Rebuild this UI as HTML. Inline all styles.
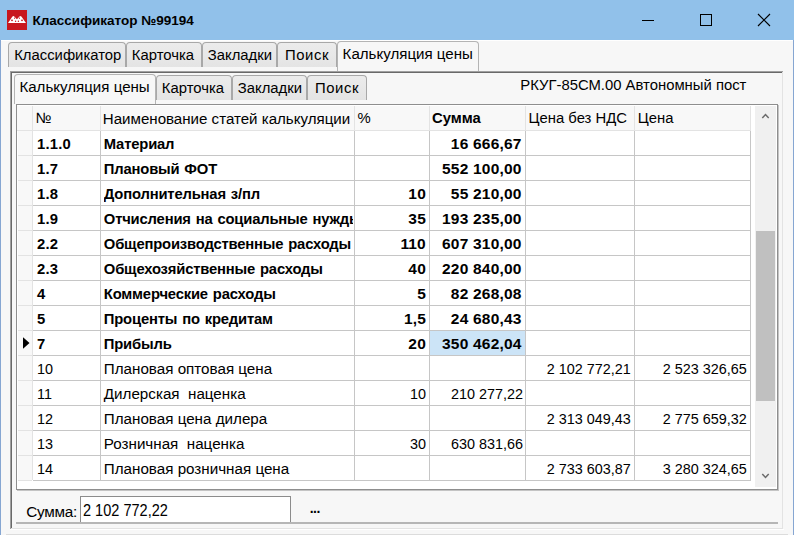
<!DOCTYPE html>
<html><head><meta charset="utf-8"><style>
html,body{margin:0;padding:0;}
body{width:794px;height:535px;position:relative;overflow:hidden;background:#F7F7F7;font-family:"Liberation Sans", sans-serif;}
.b{position:absolute;}
.t{position:absolute;white-space:nowrap;color:#000;}
</style></head><body>
<div class="b" style="left:0px;top:0px;width:794px;height:40px;background:#91C1EA;"></div><div class="b" style="left:7px;top:10px;width:20px;height:20px;background:#C8171E;"></div><svg class="b" style="left:7px;top:10px" width="20" height="20" viewBox="0 0 20 20"><path d="M1 12.9 L2.2 11.2 L5.4 6.6 L6.8 6 L9.9 9.2 L13 6 L14.4 6.6 L17.7 11.2 L19 12.9 Z" fill="#fff"/><circle cx="5" cy="10.3" r="0.9" fill="#C8171E"/><circle cx="7.6" cy="8.2" r="0.6" fill="#C8171E"/><circle cx="15" cy="10.3" r="0.9" fill="#C8171E"/><circle cx="12.4" cy="8.2" r="0.6" fill="#C8171E"/><circle cx="8.6" cy="11.2" r="0.7" fill="#C8171E"/><circle cx="11.4" cy="11.2" r="0.7" fill="#C8171E"/></svg><div class="t" style="left:32.5px;top:13.67px;font-size:13.5px;line-height:13.5px;font-weight:bold;color:#000;">Классификатор №99194</div><div class="b" style="left:642px;top:20px;width:12px;height:1px;background:#000;"></div><div class="b" style="left:700px;top:14px;width:12px;height:12px;border:1px solid #000;box-sizing:border-box;"></div><svg class="b" style="left:757px;top:13px" width="14" height="14" viewBox="0 0 14 14"><path d="M1 1 L13 13 M13 1 L1 13" stroke="#000" stroke-width="1.15" fill="none"/></svg><div class="b" style="left:0px;top:40px;width:1px;height:495px;background:#86A6D2;"></div><div class="b" style="left:793px;top:40px;width:1px;height:495px;background:#86A6D2;"></div><div class="b" style="left:1px;top:40px;width:792px;height:1px;background:#FFFFFF;"></div><div class="b" style="left:8px;top:42px;width:118px;height:25px;background:linear-gradient(#ECECEC,#E4E4E4);border:1px solid #A8A8A8;border-bottom:none;border-radius:4px 4px 0 0;box-sizing:border-box;"></div><div class="t" style="left:14.2px;top:48.43px;font-size:14.85px;line-height:14.85px;color:#000;">Классификатор</div><div class="b" style="left:126px;top:42px;width:76px;height:25px;background:linear-gradient(#ECECEC,#E4E4E4);border:1px solid #A8A8A8;border-bottom:none;border-radius:4px 4px 0 0;box-sizing:border-box;"></div><div class="t" style="left:131.8px;top:48.43px;font-size:14.85px;line-height:14.85px;color:#000;">Карточка</div><div class="b" style="left:202px;top:42px;width:75px;height:25px;background:linear-gradient(#ECECEC,#E4E4E4);border:1px solid #A8A8A8;border-bottom:none;border-radius:4px 4px 0 0;box-sizing:border-box;"></div><div class="t" style="left:207.8px;top:48.43px;font-size:14.85px;line-height:14.85px;color:#000;">Закладки</div><div class="b" style="left:277px;top:42px;width:60px;height:25px;background:linear-gradient(#ECECEC,#E4E4E4);border:1px solid #A8A8A8;border-bottom:none;border-radius:4px 4px 0 0;box-sizing:border-box;"></div><div class="t" style="left:285px;top:48.43px;font-size:14.85px;line-height:14.85px;letter-spacing:0.6px;color:#000;">Поиск</div><div class="b" style="left:10px;top:71px;width:773px;height:1px;background:#A0A0A0;"></div><div class="b" style="left:11px;top:72px;width:771px;height:1px;background:#696969;"></div><div class="b" style="left:10px;top:71px;width:1px;height:458px;background:#A0A0A0;"></div><div class="b" style="left:11px;top:72px;width:1px;height:456px;background:#696969;"></div><div class="b" style="left:782px;top:72px;width:1px;height:457px;background:#E3E3E3;"></div><div class="b" style="left:11px;top:528px;width:772px;height:1px;background:#E3E3E3;"></div><div class="b" style="left:10px;top:529px;width:774px;height:1px;background:#FFFFFF;"></div><div class="b" style="left:6px;top:534px;width:782px;height:1px;background:#DCDCDC;"></div><div class="b" style="left:337px;top:41px;width:142px;height:30px;background:#F7F7F7;border:1px solid #B4B4B4;border-bottom:none;border-radius:4px 4px 0 0;box-sizing:border-box;"></div><div class="t" style="left:342.6px;top:46.12px;font-size:15.1px;line-height:15.1px;color:#000;">Калькуляция цены</div><div class="b" style="left:156px;top:75px;width:76px;height:25px;background:linear-gradient(#ECECEC,#E4E4E4);border:1px solid #A8A8A8;border-bottom:none;border-radius:4px 4px 0 0;box-sizing:border-box;"></div><div class="t" style="left:161.8px;top:80.93px;font-size:14.85px;line-height:14.85px;color:#000;">Карточка</div><div class="b" style="left:232px;top:75px;width:75px;height:25px;background:linear-gradient(#ECECEC,#E4E4E4);border:1px solid #A8A8A8;border-bottom:none;border-radius:4px 4px 0 0;box-sizing:border-box;"></div><div class="t" style="left:237.8px;top:80.93px;font-size:14.85px;line-height:14.85px;color:#000;">Закладки</div><div class="b" style="left:307px;top:75px;width:60px;height:25px;background:linear-gradient(#ECECEC,#E4E4E4);border:1px solid #A8A8A8;border-bottom:none;border-radius:4px 4px 0 0;box-sizing:border-box;"></div><div class="t" style="left:315px;top:80.93px;font-size:14.85px;line-height:14.85px;letter-spacing:0.6px;color:#000;">Поиск</div><div class="b" style="left:14px;top:74px;width:142px;height:30px;background:#F7F7F7;border:1px solid #B4B4B4;border-bottom:none;border-radius:4px 4px 0 0;box-sizing:border-box;"></div><div class="t" style="left:19.4px;top:78.52px;font-size:15.1px;line-height:15.1px;color:#000;">Калькуляция цены</div><div class="t" style="left:520.3px;top:78.23px;font-size:14.85px;line-height:14.85px;color:#000;">РКУГ-85СМ.00 Автономный пост</div><div class="b" style="left:16px;top:104px;width:762px;height:386px;background:#fff;border:1px solid #8E8E8E;box-sizing:border-box;"></div><div class="b" style="left:17px;top:490px;width:762px;height:1px;background:#C4C4C4;"></div><div class="b" style="left:778px;top:105px;width:1px;height:386px;background:#C4C4C4;"></div><div class="b" style="left:17px;top:106px;width:734px;height:24px;background:#F8F8F8;"></div><div class="b" style="left:18px;top:130px;width:14px;height:350px;background:#F8F8F8;"></div><div class="b" style="left:32px;top:106px;width:1px;height:24px;background:#E3E3E3;"></div><div class="b" style="left:32px;top:130px;width:1px;height:350px;background:#E3E3E3;"></div><div class="b" style="left:100px;top:106px;width:1px;height:24px;background:#E3E3E3;"></div><div class="b" style="left:100px;top:130px;width:1px;height:350px;background:#C6C6C6;"></div><div class="b" style="left:354px;top:106px;width:1px;height:24px;background:#E3E3E3;"></div><div class="b" style="left:354px;top:130px;width:1px;height:350px;background:#C6C6C6;"></div><div class="b" style="left:429px;top:106px;width:1px;height:24px;background:#E3E3E3;"></div><div class="b" style="left:429px;top:130px;width:1px;height:350px;background:#C6C6C6;"></div><div class="b" style="left:525px;top:106px;width:1px;height:24px;background:#E3E3E3;"></div><div class="b" style="left:525px;top:130px;width:1px;height:350px;background:#C6C6C6;"></div><div class="b" style="left:634px;top:106px;width:1px;height:24px;background:#E3E3E3;"></div><div class="b" style="left:634px;top:130px;width:1px;height:350px;background:#C6C6C6;"></div><div class="b" style="left:750px;top:106px;width:1px;height:24px;background:#E3E3E3;"></div><div class="b" style="left:750px;top:130px;width:1px;height:350px;background:#C6C6C6;"></div><div class="b" style="left:17px;top:130px;width:734px;height:1px;background:#E3E3E3;"></div><div class="b" style="left:18px;top:155px;width:14px;height:1px;background:#E3E3E3;"></div><div class="b" style="left:33px;top:155px;width:718px;height:1px;background:#C6C6C6;"></div><div class="b" style="left:18px;top:180px;width:14px;height:1px;background:#E3E3E3;"></div><div class="b" style="left:33px;top:180px;width:718px;height:1px;background:#C6C6C6;"></div><div class="b" style="left:18px;top:205px;width:14px;height:1px;background:#E3E3E3;"></div><div class="b" style="left:33px;top:205px;width:718px;height:1px;background:#C6C6C6;"></div><div class="b" style="left:18px;top:230px;width:14px;height:1px;background:#E3E3E3;"></div><div class="b" style="left:33px;top:230px;width:718px;height:1px;background:#C6C6C6;"></div><div class="b" style="left:18px;top:255px;width:14px;height:1px;background:#E3E3E3;"></div><div class="b" style="left:33px;top:255px;width:718px;height:1px;background:#C6C6C6;"></div><div class="b" style="left:18px;top:280px;width:14px;height:1px;background:#E3E3E3;"></div><div class="b" style="left:33px;top:280px;width:718px;height:1px;background:#C6C6C6;"></div><div class="b" style="left:18px;top:305px;width:14px;height:1px;background:#E3E3E3;"></div><div class="b" style="left:33px;top:305px;width:718px;height:1px;background:#C6C6C6;"></div><div class="b" style="left:18px;top:330px;width:14px;height:1px;background:#E3E3E3;"></div><div class="b" style="left:33px;top:330px;width:718px;height:1px;background:#C6C6C6;"></div><div class="b" style="left:18px;top:355px;width:14px;height:1px;background:#E3E3E3;"></div><div class="b" style="left:33px;top:355px;width:718px;height:1px;background:#C6C6C6;"></div><div class="b" style="left:18px;top:380px;width:14px;height:1px;background:#E3E3E3;"></div><div class="b" style="left:33px;top:380px;width:718px;height:1px;background:#C6C6C6;"></div><div class="b" style="left:18px;top:405px;width:14px;height:1px;background:#E3E3E3;"></div><div class="b" style="left:33px;top:405px;width:718px;height:1px;background:#C6C6C6;"></div><div class="b" style="left:18px;top:430px;width:14px;height:1px;background:#E3E3E3;"></div><div class="b" style="left:33px;top:430px;width:718px;height:1px;background:#C6C6C6;"></div><div class="b" style="left:18px;top:455px;width:14px;height:1px;background:#E3E3E3;"></div><div class="b" style="left:33px;top:455px;width:718px;height:1px;background:#C6C6C6;"></div><div class="b" style="left:18px;top:480px;width:14px;height:1px;background:#E3E3E3;"></div><div class="b" style="left:33px;top:480px;width:718px;height:1px;background:#C6C6C6;"></div><div class="b" style="left:430px;top:331px;width:95px;height:24px;background:#CCE4F7;"></div><svg class="b" style="left:23px;top:336.5px" width="7" height="12" viewBox="0 0 7 12"><path d="M0 0.2 L6.5 6 L0 11.8 Z" fill="#000"/></svg><div class="t" style="left:35.7px;top:110.93px;font-size:14.85px;line-height:14.85px;color:#000;">№</div><div class="t" style="left:102.8px;top:110.72px;font-size:15.1px;line-height:15.1px;color:#000;">Наименование статей калькуляции</div><div class="t" style="left:357.5px;top:110.93px;font-size:14.85px;line-height:14.85px;color:#000;">%</div><div class="t" style="left:432px;top:110.93px;font-size:14.85px;line-height:14.85px;font-weight:bold;color:#000;">Сумма</div><div class="t" style="left:528.5px;top:110.93px;font-size:14.85px;line-height:14.85px;color:#000;">Цена без НДС</div><div class="t" style="left:637.8px;top:110.93px;font-size:14.85px;line-height:14.85px;color:#000;">Цена</div><div class="t" style="left:37px;top:136.97px;font-size:14.8px;line-height:14.8px;font-weight:bold;letter-spacing:0.2px;color:#000;">1.1.0</div><div class="t" style="left:103.8px;top:136.97px;width:249px;overflow:hidden;font-size:14.8px;line-height:14.8px;font-weight:bold;letter-spacing:-0.18px;word-spacing:1px;white-space:nowrap">Материал</div><div class="t" style="right:272.4px;top:135.88px;font-size:15.5px;line-height:15.5px;font-weight:bold;letter-spacing:0.2px;">16 666,67</div><div class="t" style="left:37px;top:161.97px;font-size:14.8px;line-height:14.8px;font-weight:bold;letter-spacing:0.2px;color:#000;">1.7</div><div class="t" style="left:103.8px;top:161.97px;width:249px;overflow:hidden;font-size:14.8px;line-height:14.8px;font-weight:bold;letter-spacing:-0.18px;word-spacing:1px;white-space:nowrap">Плановый ФОТ</div><div class="t" style="right:272.4px;top:160.88px;font-size:15.5px;line-height:15.5px;font-weight:bold;letter-spacing:0.2px;">552 100,00</div><div class="t" style="left:37px;top:186.97px;font-size:14.8px;line-height:14.8px;font-weight:bold;letter-spacing:0.2px;color:#000;">1.8</div><div class="t" style="left:103.8px;top:186.97px;width:249px;overflow:hidden;font-size:14.8px;line-height:14.8px;font-weight:bold;letter-spacing:-0.18px;word-spacing:1px;white-space:nowrap">Дополнительная з/пл</div><div class="t" style="right:368.1px;top:185.88px;font-size:15.5px;line-height:15.5px;font-weight:bold;letter-spacing:0.15px;">10</div><div class="t" style="right:272.4px;top:185.88px;font-size:15.5px;line-height:15.5px;font-weight:bold;letter-spacing:0.2px;">55 210,00</div><div class="t" style="left:37px;top:211.97px;font-size:14.8px;line-height:14.8px;font-weight:bold;letter-spacing:0.2px;color:#000;">1.9</div><div class="t" style="left:103.8px;top:211.97px;width:249px;overflow:hidden;font-size:14.8px;line-height:14.8px;font-weight:bold;letter-spacing:-0.18px;word-spacing:1px;white-space:nowrap">Отчисления на социальные нужды</div><div class="t" style="right:368.1px;top:210.88px;font-size:15.5px;line-height:15.5px;font-weight:bold;letter-spacing:0.15px;">35</div><div class="t" style="right:272.4px;top:210.88px;font-size:15.5px;line-height:15.5px;font-weight:bold;letter-spacing:0.2px;">193 235,00</div><div class="t" style="left:37px;top:236.97px;font-size:14.8px;line-height:14.8px;font-weight:bold;letter-spacing:0.2px;color:#000;">2.2</div><div class="t" style="left:103.8px;top:236.97px;width:249px;overflow:hidden;font-size:14.8px;line-height:14.8px;font-weight:bold;letter-spacing:-0.18px;word-spacing:1px;white-space:nowrap">Общепроизводственные расходы</div><div class="t" style="right:368.1px;top:235.88px;font-size:15.5px;line-height:15.5px;font-weight:bold;letter-spacing:0.15px;">110</div><div class="t" style="right:272.4px;top:235.88px;font-size:15.5px;line-height:15.5px;font-weight:bold;letter-spacing:0.2px;">607 310,00</div><div class="t" style="left:37px;top:261.97px;font-size:14.8px;line-height:14.8px;font-weight:bold;letter-spacing:0.2px;color:#000;">2.3</div><div class="t" style="left:103.8px;top:261.97px;width:249px;overflow:hidden;font-size:14.8px;line-height:14.8px;font-weight:bold;letter-spacing:-0.18px;word-spacing:1px;white-space:nowrap">Общехозяйственные расходы</div><div class="t" style="right:368.1px;top:260.88px;font-size:15.5px;line-height:15.5px;font-weight:bold;letter-spacing:0.15px;">40</div><div class="t" style="right:272.4px;top:260.88px;font-size:15.5px;line-height:15.5px;font-weight:bold;letter-spacing:0.2px;">220 840,00</div><div class="t" style="left:37px;top:286.97px;font-size:14.8px;line-height:14.8px;font-weight:bold;letter-spacing:0.2px;color:#000;">4</div><div class="t" style="left:103.8px;top:286.97px;width:249px;overflow:hidden;font-size:14.8px;line-height:14.8px;font-weight:bold;letter-spacing:-0.18px;word-spacing:1px;white-space:nowrap">Коммерческие расходы</div><div class="t" style="right:368.1px;top:285.88px;font-size:15.5px;line-height:15.5px;font-weight:bold;letter-spacing:0.15px;">5</div><div class="t" style="right:272.4px;top:285.88px;font-size:15.5px;line-height:15.5px;font-weight:bold;letter-spacing:0.2px;">82 268,08</div><div class="t" style="left:37px;top:311.97px;font-size:14.8px;line-height:14.8px;font-weight:bold;letter-spacing:0.2px;color:#000;">5</div><div class="t" style="left:103.8px;top:311.97px;width:249px;overflow:hidden;font-size:14.8px;line-height:14.8px;font-weight:bold;letter-spacing:-0.18px;word-spacing:1px;white-space:nowrap">Проценты по кредитам</div><div class="t" style="right:368.1px;top:310.88px;font-size:15.5px;line-height:15.5px;font-weight:bold;letter-spacing:0.15px;">1,5</div><div class="t" style="right:272.4px;top:310.88px;font-size:15.5px;line-height:15.5px;font-weight:bold;letter-spacing:0.2px;">24 680,43</div><div class="t" style="left:37px;top:336.97px;font-size:14.8px;line-height:14.8px;font-weight:bold;letter-spacing:0.2px;color:#000;">7</div><div class="t" style="left:103.8px;top:336.97px;width:249px;overflow:hidden;font-size:14.8px;line-height:14.8px;font-weight:bold;letter-spacing:-0.18px;word-spacing:1px;white-space:nowrap">Прибыль</div><div class="t" style="right:368.1px;top:335.88px;font-size:15.5px;line-height:15.5px;font-weight:bold;letter-spacing:0.15px;">20</div><div class="t" style="right:272.4px;top:335.88px;font-size:15.5px;line-height:15.5px;font-weight:bold;letter-spacing:0.2px;">350 462,04</div><div class="t" style="left:37px;top:361.03px;font-size:15.2px;line-height:15.2px;transform:scaleX(0.947);transform-origin:0 50%;">10</div><div class="t" style="left:103.8px;top:361.03px;font-size:15.2px;line-height:15.2px;color:#000;">Плановая оптовая цена</div><div class="t" style="right:163px;top:361.03px;font-size:15.2px;line-height:15.2px;transform:scaleX(0.947);transform-origin:100% 50%;">2 102 772,21</div><div class="t" style="right:47px;top:361.03px;font-size:15.2px;line-height:15.2px;transform:scaleX(0.947);transform-origin:100% 50%;">2 523 326,65</div><div class="t" style="left:37px;top:386.03px;font-size:15.2px;line-height:15.2px;transform:scaleX(0.947);transform-origin:0 50%;">11</div><div class="t" style="left:103.8px;top:386.03px;font-size:15.2px;line-height:15.2px;color:#000;">Дилерская&nbsp; наценка</div><div class="t" style="right:368px;top:386.03px;font-size:15.2px;line-height:15.2px;transform:scaleX(0.947);transform-origin:100% 50%;">10</div><div class="t" style="right:271.4px;top:386.03px;font-size:15.2px;line-height:15.2px;transform:scaleX(0.947);transform-origin:100% 50%;">210 277,22</div><div class="t" style="left:37px;top:411.03px;font-size:15.2px;line-height:15.2px;transform:scaleX(0.947);transform-origin:0 50%;">12</div><div class="t" style="left:103.8px;top:411.03px;font-size:15.2px;line-height:15.2px;color:#000;">Плановая цена дилера</div><div class="t" style="right:163px;top:411.03px;font-size:15.2px;line-height:15.2px;transform:scaleX(0.947);transform-origin:100% 50%;">2 313 049,43</div><div class="t" style="right:47px;top:411.03px;font-size:15.2px;line-height:15.2px;transform:scaleX(0.947);transform-origin:100% 50%;">2 775 659,32</div><div class="t" style="left:37px;top:436.03px;font-size:15.2px;line-height:15.2px;transform:scaleX(0.947);transform-origin:0 50%;">13</div><div class="t" style="left:103.8px;top:436.03px;font-size:15.2px;line-height:15.2px;color:#000;">Розничная&nbsp; наценка</div><div class="t" style="right:368px;top:436.03px;font-size:15.2px;line-height:15.2px;transform:scaleX(0.947);transform-origin:100% 50%;">30</div><div class="t" style="right:271.4px;top:436.03px;font-size:15.2px;line-height:15.2px;transform:scaleX(0.947);transform-origin:100% 50%;">630 831,66</div><div class="t" style="left:37px;top:461.03px;font-size:15.2px;line-height:15.2px;transform:scaleX(0.947);transform-origin:0 50%;">14</div><div class="t" style="left:103.8px;top:461.03px;font-size:15.2px;line-height:15.2px;color:#000;">Плановая розничная цена</div><div class="t" style="right:163px;top:461.03px;font-size:15.2px;line-height:15.2px;transform:scaleX(0.947);transform-origin:100% 50%;">2 733 603,87</div><div class="t" style="right:47px;top:461.03px;font-size:15.2px;line-height:15.2px;transform:scaleX(0.947);transform-origin:100% 50%;">3 280 324,65</div><div class="b" style="left:755px;top:106px;width:21px;height:381px;background:#F0F0F0;"></div><div class="b" style="left:756px;top:231px;width:19px;height:170px;background:#C0C0C0;"></div><svg class="b" style="left:761px;top:112px" width="9" height="8" viewBox="0 0 9 8"><path d="M1.3 6 L4.5 2.6 L7.7 6" stroke="#6A6A6A" stroke-width="1.5" fill="none"/></svg><svg class="b" style="left:761px;top:472px" width="9" height="8" viewBox="0 0 9 8"><path d="M1.3 2 L4.5 5.4 L7.7 2" stroke="#6A6A6A" stroke-width="1.5" fill="none"/></svg><div class="b" style="left:16px;top:522px;width:762px;height:2px;background:#B6B6B6;"></div><div class="t" style="left:26.2px;top:504.15px;font-size:15.3px;line-height:15.3px;letter-spacing:-0.25px;color:#000;">Сумма:</div><div class="b" style="left:80px;top:496px;width:211px;height:26px;background:#fff;border:1px solid #8C8C8C;border-bottom:none;box-sizing:border-box;"></div><div class="t" style="left:83px;top:503.33px;font-size:15.8px;line-height:15.8px;transform:scaleX(0.92);transform-origin:0 50%;">2 102 772,22</div><div class="t" style="left:309.8px;top:500.65px;font-size:14px;line-height:14px;font-weight:bold;letter-spacing:-0.6px;color:#000;">...</div>
</body></html>
